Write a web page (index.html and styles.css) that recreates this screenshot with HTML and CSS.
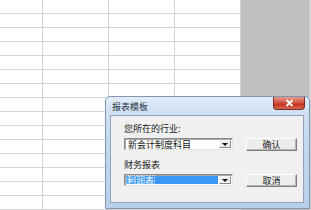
FILE: index.html
```html
<!DOCTYPE html>
<html lang="zh">
<head>
<meta charset="utf-8">
<link rel="stylesheet" href="styles.css">
</head>
<body>
<div class="screen">
  <div class="sheet">
    <div class="cells">
      <div class="row first"><div class="c c0"></div><div class="c"></div><div class="c"></div><div class="c"></div></div>
      <div class="row"><div class="c c0"></div><div class="c"></div><div class="c"></div><div class="c"></div></div>
      <div class="row"><div class="c c0"></div><div class="c"></div><div class="c"></div><div class="c"></div></div>
      <div class="row"><div class="c c0"></div><div class="c"></div><div class="c"></div><div class="c"></div></div>
      <div class="row"><div class="c c0"></div><div class="c"></div><div class="c"></div><div class="c"></div></div>
      <div class="row"><div class="c c0"></div><div class="c"></div><div class="c"></div><div class="c"></div></div>
      <div class="row"><div class="c c0"></div><div class="c"></div><div class="c"></div><div class="c"></div></div>
      <div class="row"><div class="c c0"></div><div class="c"></div><div class="c"></div><div class="c"></div></div>
      <div class="row"><div class="c c0"></div><div class="c"></div><div class="c"></div><div class="c"></div></div>
      <div class="row"><div class="c c0"></div><div class="c"></div><div class="c"></div><div class="c"></div></div>
      <div class="row"><div class="c c0"></div><div class="c"></div><div class="c"></div><div class="c"></div></div>
      <div class="row"><div class="c c0"></div><div class="c"></div><div class="c"></div><div class="c"></div></div>
      <div class="row"><div class="c c0"></div><div class="c"></div><div class="c"></div><div class="c"></div></div>
      <div class="row"><div class="c c0"></div><div class="c"></div><div class="c"></div><div class="c"></div></div>
      <div class="row"><div class="c c0"></div><div class="c"></div><div class="c"></div><div class="c"></div></div>
    </div>
    <div class="gray"></div>
  </div>

  <div class="dialog">
    <div class="titlebar">
      <span class="title">报表模板</span>
      <span class="close">
        <svg width="9" height="8" viewBox="0 0 9 8"><path d="M1.5 1 L7.5 7 M7.5 1 L1.5 7" stroke="#fff" stroke-width="1.8" fill="none"/></svg>
      </span>
    </div>
    <div class="client">
      <div class="form">
        <div class="label l1">您所在的行业:</div>
        <div class="combo c1"><span class="val">新会计制度科目</span><span class="drop"><i class="tri"></i></span></div>
        <div class="btn b1">确认</div>
        <div class="label l2">财务报表</div>
        <div class="combo c2"><span class="val sel"><span class="focus">利润表</span></span><span class="drop"><i class="tri"></i></span></div>
        <div class="btn b2">取消</div>
      </div>
    </div>
  </div>
</div>
</body>
</html>
```

FILE: styles.css
```css
html, body {
  margin: 0;
  padding: 0;
  background: #fff;
}
.screen {
  position: relative;
  width: 311px;
  height: 210px;
  overflow: hidden;
  font-family: "Noto Sans CJK SC", "Liberation Sans", sans-serif;
}
.sheet {
  display: flex;
  width: 311px;
  height: 210px;
}
.cells {
  width: 241px;
  flex: none;
  display: flex;
  flex-direction: column;
}
.row {
  display: flex;
  height: 14px;
  flex: none;
  box-sizing: border-box;
  border-bottom: 1px solid #d3d3d3;
}
.c {
  width: 66px;
  box-sizing: border-box;
  border-right: 1px solid #d3d3d3;
  flex: none;
}
.c0 {
  width: 43px;
}
.gray {
  flex: 1;
  background: #c0c0c0;
  border-right: 2px solid #d2d2d2;
}

.dialog {
  position: absolute;
  left: 105px;
  top: 96px;
  width: 205px;
  height: 113px;
  box-sizing: border-box;
  border: 1px solid #7f95b0;
  border-radius: 5px 5px 0 0;
  background: linear-gradient(#e3edf8 0px, #d4e3f3 10px, #c5d8ee 40px, #b8cfe9 100%);
  display: flex;
  flex-direction: column;
  padding: 0 5px 5px 4px;
}
.titlebar {
  height: 18px;
  display: flex;
  align-items: center;
  justify-content: space-between;
  flex: none;
}
.title {
  font-size: 9px;
  color: #2a3443;
  padding-left: 2px;
  padding-top: 1px;
}
.close {
  width: 32px;
  height: 13px;
  margin-top: -5px;
  margin-right: -1px;
  box-sizing: border-box;
  border: 1px solid #7a2a22;
  border-top: none;
  border-radius: 0 0 4px 4px;
  background: linear-gradient(#e59a8d, #d1503e 50%, #c2311f 60%, #d66a52);
  display: flex;
  align-items: center;
  justify-content: center;
}
.client {
  flex: 1;
  background: #f0f0f0;
  border: 1px solid #8ea3bd;
  box-sizing: border-box;
}
.form {
  display: grid;
  grid-template-columns: 109px 51px;
  grid-template-rows: 22px 13px 23px 13px;
  column-gap: 13px;
  padding-left: 13px;
}
.label {
  font-size: 9px;
  color: #1a1a1a;
  line-height: 11px;
  grid-column: 1;
}
.l1 {
  grid-row: 1;
  align-self: end;
  padding-bottom: 4px;
}
.l2 {
  grid-row: 3;
  align-self: center;
  padding-top: 3px;
}
.combo {
  grid-column: 1;
  height: 12px;
  box-sizing: border-box;
  background: #fff;
  border: 1px solid;
  border-color: #8a8a8a #e4e4e4 #e4e4e4 #8a8a8a;
  box-shadow: inset 1px 1px 0 #a8a8a8;
  display: flex;
  align-items: stretch;
  padding: 1px;
}
.c1 { grid-row: 2; }
.c2 { grid-row: 4; }
.val {
  flex: 1;
  font-size: 9px;
  line-height: 9px;
  color: #111;
  padding-left: 2px;
  display: flex;
  align-items: center;
}
.val.sel {
  background: #3b98f4;
  color: #fff;
  padding-left: 1px;
  margin-right: 1px;
}
.focus {
  outline: 1px dotted #cfe4fb;
}
.drop {
  width: 12px;
  flex: none;
  box-sizing: border-box;
  background: #ececec;
  border: 1px solid;
  border-color: #fbfbfb #8b8b8b #8b8b8b #fbfbfb;
  display: flex;
  align-items: center;
  justify-content: center;
}
.tri {
  width: 0;
  height: 0;
  border-left: 3px solid transparent;
  border-right: 3px solid transparent;
  border-top: 3px solid #111;
  margin-top: 1px;
}
.btn {
  grid-column: 2;
  height: 13px;
  box-sizing: border-box;
  border: 1px solid;
  border-color: #fdfdfd #7c7c7c #7c7c7c #fdfdfd;
  box-shadow: inset -1px -1px 0 #b8b8b8;
  background: #ececec;
  font-size: 9px;
  color: #1a1a1a;
  display: flex;
  align-items: center;
  justify-content: center;
  line-height: 9px;
}
.b1 { grid-row: 2; }
.b2 { grid-row: 4; }
```
